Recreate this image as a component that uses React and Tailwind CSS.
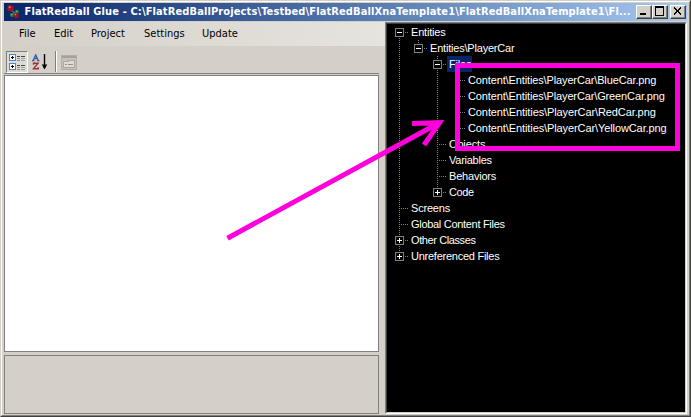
import React from "react";

const MENU = [
  { label: "File", cls: "w-[35px]" },
  { label: "Edit", cls: "w-[37px]" },
  { label: "Project", cls: "w-[53px]" },
  { label: "Settings", cls: "w-[58px]" },
  { label: "Update", cls: "w-[50px]" },
];

// guides: vertical connector per column ("full", "top", "bottom" or ""); the last one is the row's own column
const ROWS = [
  { label: "Entities", guides: ["bottom"], box: "-", ls: "tracking-[-0.2px]" },
  { label: "Entities\\PlayerCar", guides: ["full", "top"], box: "-", ls: "tracking-[-0.2px]" },
  { label: "Files", guides: ["full", "", "full"], box: "-", selected: true, ls: "tracking-[-0.2px]" },
  { label: "Content\\Entities\\PlayerCar\\BlueCar.png", guides: ["full", "", "full", "full"], ls: "tracking-[-0.13px]" },
  { label: "Content\\Entities\\PlayerCar\\GreenCar.png", guides: ["full", "", "full", "full"], ls: "tracking-[-0.13px]" },
  { label: "Content\\Entities\\PlayerCar\\RedCar.png", guides: ["full", "", "full", "full"], ls: "tracking-[-0.1px]" },
  { label: "Content\\Entities\\PlayerCar\\YellowCar.png", guides: ["full", "", "full", "top"], ls: "tracking-[-0.1px]" },
  { label: "Objects", guides: ["full", "", "full"], ls: "tracking-[-0.15px]" },
  { label: "Variables", guides: ["full", "", "full"], ls: "tracking-[-0.25px]" },
  { label: "Behaviors", guides: ["full", "", "full"], ls: "tracking-[-0.2px]" },
  { label: "Code", guides: ["full", "", "top"], box: "+", ls: "tracking-[-0.4px]" },
  { label: "Screens", guides: ["full"], ls: "tracking-[-0.2px]" },
  { label: "Global Content Files", guides: ["full"], ls: "tracking-[-0.3px]" },
  { label: "Other Classes", guides: ["full"], box: "+", ls: "tracking-[-0.4px]" },
  { label: "Unreferenced Files", guides: ["top"], box: "+", ls: "tracking-[-0.25px]" },
];

function Guide({ kind, own, box }) {
  return (
    <svg className="block h-4 w-[19px] shrink-0" viewBox="0 0 19 16" shapeRendering="crispEdges">
      {(kind === "full" || kind === "top") && <path d="M9.5 0V8" stroke="#808080" strokeDasharray="1 1" />}
      {(kind === "full" || kind === "bottom") && <path d="M9.5 8V16" stroke="#808080" strokeDasharray="1 1" />}
      {own && <path d="M9 8.5H18" stroke="#808080" strokeDasharray="1 1" />}
      {own && box && (
        <>
          <rect x="5.5" y="4.5" width="8" height="8" fill="#000" stroke="#808080" />
          <path d="M7 8.5H12" stroke="#fff" />
          {box === "+" && <path d="M9.5 6V11" stroke="#fff" />}
        </>
      )}
    </svg>
  );
}

function TreeRow({ row }) {
  const last = row.guides.length - 1;
  return (
    <div className="flex h-4">
      {row.guides.map((g, i) => (
        <Guide key={i} kind={g} own={i === last} box={row.box} />
      ))}
      <span className={`h-4 whitespace-pre pr-[2px] pl-[2px] text-[11px] leading-4 text-white ${row.ls} ${row.selected ? "w-[25px] bg-[#0a246a]" : ""}`}>
        {row.label}
      </span>
    </div>
  );
}

function WinButton({ children }) {
  return (
    <div className="h-[14px] w-4 border border-t-white border-r-[#404040] border-b-[#404040] border-l-white bg-[#d4d0c8]">
      <svg className="block h-3 w-[14px] border-r border-b border-[#808080]" viewBox="0 0 13 11" shapeRendering="crispEdges">
        {children}
      </svg>
    </div>
  );
}

function AppIcon() {
  return (
    <svg className="mr-[2px] block h-4 w-4" viewBox="0 0 16 16">
      <path d="M5 5L10 11M11 8L6 11" stroke="#5d6a86" strokeWidth="1.2" />
      <circle cx="4.5" cy="4.3" r="3.2" fill="#a5101c" />
      <circle cx="3.7" cy="3.2" r="1" fill="#e87078" />
      <circle cx="11" cy="7.7" r="1.9" fill="#1d8a34" />
      <circle cx="10.6" cy="7.1" r=".7" fill="#65c96b" />
      <circle cx="6" cy="11" r="2" fill="#1d8a34" />
      <circle cx="5.5" cy="10.4" r=".7" fill="#62c468" />
      <circle cx="10.2" cy="11.5" r="2.6" fill="#a5101c" />
      <circle cx="9.5" cy="10.6" r=".8" fill="#e87078" />
    </svg>
  );
}

function CategorizedIcon() {
  return (
    <svg className="block h-4 w-4" viewBox="0 0 16 16" shapeRendering="crispEdges">
      {[0, 9].map((y) => (
        <g key={y} transform={`translate(0 ${y})`}>
          <rect x=".5" y=".5" width="6" height="6" rx="1" fill="#fff" stroke="#4d86c4" />
          <path d="M2 3.5H5M3.5 2V5" stroke="#000" />
          <path d="M8 2.5H11M12 2.5H16" stroke="#444" />
          <path d="M8 4.5H11M8 6.5H11" stroke="#8d8d9c" />
          <path d="M12 4.5H16M12 6.5H16" stroke="#8fa3bd" />
        </g>
      ))}
    </svg>
  );
}

function SortIcon() {
  return (
    <svg className="block h-4 w-4" viewBox="0 0 16 16">
      <path d="M1.2 6.5L3.7 .8L6.2 6.5M2 4.5H5.5M0 6.7H2.5M5 6.7H7.5" fill="none" stroke="#315eaf" strokeWidth="1.3" />
      <path d="M1.5 10.8V9.2H6L1.5 14.8H6.3V13.2" fill="none" stroke="#9d3039" strokeWidth="1.4" />
      <path d="M12.5 0V14" stroke="#000" strokeWidth="1.4" />
      <path d="M9.8 10.5H15.2L12.5 15.5Z" fill="#000" />
    </svg>
  );
}

function PagesIcon() {
  return (
    <svg className="block h-4 w-4" viewBox="0 0 16 16" shapeRendering="crispEdges">
      <rect x=".5" y=".5" width="15" height="14" fill="#c5c2bb" stroke="#b1aea8" />
      <path d="M1 2H15" stroke="#a5a29c" strokeWidth="2" />
      <path d="M2.5 12.5V6.5H7.5V5.5H13.5V12.5Z" fill="#dedbd4" stroke="#aaa7a1" />
      <path d="M4 9.5H6M7 9.5H12" stroke="#96938e" />
    </svg>
  );
}

export default function App() {
  return (
    <div className="relative h-[417px] w-[691px] overflow-hidden border-t border-r border-b border-l border-t-[#d4d0c8] border-r-[#404040] border-b-[#404040] border-l-[#d4d0c8] bg-[#d4d0c8]">
      <div className="flex h-[415px] w-[689px] flex-col border border-t-white border-r-[#808080] border-b-[#808080] border-l-white pt-px pr-[2px] pl-[2px]">
        <div className="flex h-[18px] shrink-0 items-center bg-linear-to-r from-[#0a246a] to-[#a6caf0] pl-[2px]">
          <AppIcon />
          <span className="w-[612px] whitespace-pre pl-[0.5px] font-['DejaVu_Sans_Condensed','DejaVu_Sans',sans-serif] text-[11px] leading-[18px] font-bold tracking-[0.12px] text-white">
            FlatRedBall Glue - C:\FlatRedBallProjects\Testbed\FlatRedBallXnaTemplate1\FlatRedBallXnaTemplate1\Fl...
          </span>
          <WinButton><path d="M3 8H9" stroke="#000" strokeWidth="2" /></WinButton>
          <WinButton><path d="M2.5 1V9.5H10.5V1M2 1H11" fill="none" stroke="#000" /><path d="M2 1H11" stroke="#000" strokeWidth="2" /></WinButton>
          <span className="w-[2px]" />
          <WinButton><path d="M3 1.5L10 8.5M10 1.5L3 8.5" stroke="#000" strokeWidth="1.6" /></WinButton>
        </div>
        <div className="mt-px flex h-[392px]">
          <div className="flex w-[381px] shrink-0 flex-col">
            <div className="flex h-6 shrink-0 items-center bg-linear-to-r from-[#d4d0c8] to-[#e6e4df] pl-[15px] font-['DejaVu_Sans_Condensed','DejaVu_Sans',sans-serif] text-[11px] text-black">
              {MENU.map((m) => (
                <span key={m.label} className={`${m.cls} shrink-0 leading-6 whitespace-pre`}>{m.label}</span>
              ))}
            </div>
            <div className="flex h-[28px] w-[375px] shrink-0 items-start border-b border-[#808080] pt-[5px] pl-[2px]">
              <div className="h-[22px] w-[22px] border border-t-[#808080] border-r-white border-b-white border-l-[#808080] bg-[#dedbd5] pt-[2px] pl-[2px]">
                <CategorizedIcon />
              </div>
              <div className="pt-[3px] pl-1"><SortIcon /></div>
              <div className="ml-[7px] h-[21px] w-[2px] border-l border-[#808080] border-r border-r-white" />
              <div className="pt-[4px] pl-[4px]"><PagesIcon /></div>
            </div>
            <div className="mt-px h-[277px] w-[375px] shrink-0 border border-[#808080] bg-white" />
            <div className="mt-[3px] h-[59px] w-[375px] shrink-0 border border-[#808080]" />
          </div>
          <div className="h-[392px] w-[303px] border border-t-[#808080] border-r-white border-b-white border-l-[#808080]">
            <div className="h-[390px] border border-t-[#404040] border-r-[#d4d0c8] border-b-[#d4d0c8] border-l-[#404040] bg-black pl-[3px] font-['Liberation_Sans',Arial,sans-serif]">
              {ROWS.map((r) => <TreeRow key={r.label} row={r} />)}
            </div>
          </div>
        </div>
      </div>
      <svg className="absolute -top-px -left-px h-[417px] w-[691px]" viewBox="0 0 691 417">
        <rect x="457.5" y="65.5" width="220" height="83" fill="none" stroke="#ff00dc" strokeWidth="5" />
        <path d="M227.5 238.2L438 123.5M412 123.6L439.5 122.7L424 145" fill="none" stroke="#ff00dc" strokeWidth="5" />
      </svg>
    </div>
  );
}
